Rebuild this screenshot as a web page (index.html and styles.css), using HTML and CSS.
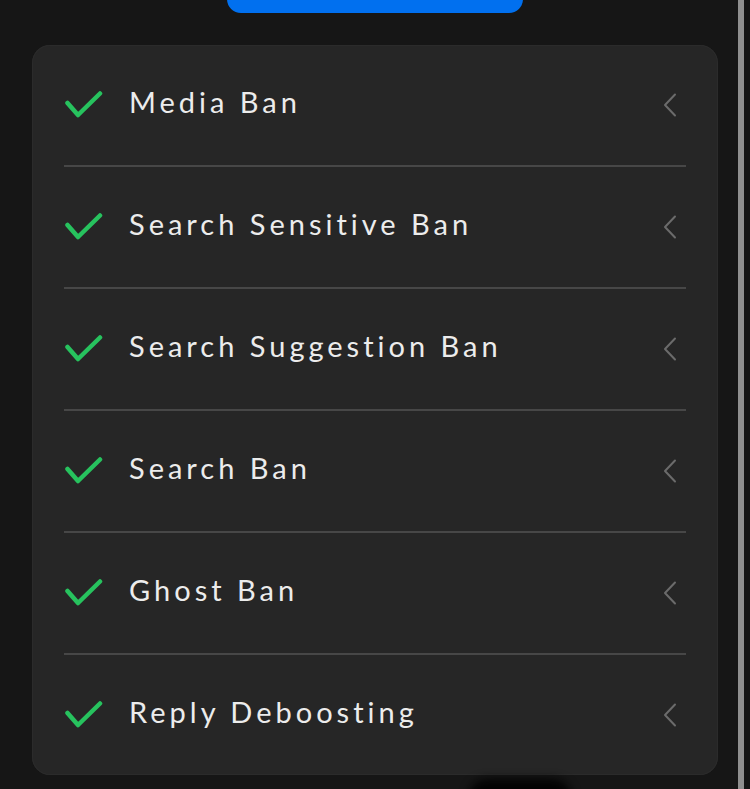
FILE: index.html
```html
<!DOCTYPE html>
<html lang="en">
<head>
<meta charset="utf-8">
<title>Ban checks</title>
<link rel="stylesheet" href="styles.css">
</head>
<body>
<div class="main">
  <div class="top-button"></div>
  <div class="card">
    <div class="row">
      <svg class="check" width="40" height="28" viewBox="0 0 40 28"><path d="M3.5 12 L14 24 L36 2.5" fill="none" stroke="#27c25e" stroke-width="4.5" stroke-linecap="round" stroke-linejoin="round"/></svg>
      <span class="label">Media Ban</span>
      <svg class="chev" width="14" height="24" viewBox="0 0 14 24"><path d="M12 1.5 L2 12 L12 22.5" fill="none" stroke="#6b6b6b" stroke-width="2" stroke-linecap="round" stroke-linejoin="round"/></svg>
    </div>
    <div class="row">
      <svg class="check" width="40" height="28" viewBox="0 0 40 28"><path d="M3.5 12 L14 24 L36 2.5" fill="none" stroke="#27c25e" stroke-width="4.5" stroke-linecap="round" stroke-linejoin="round"/></svg>
      <span class="label">Search Sensitive Ban</span>
      <svg class="chev" width="14" height="24" viewBox="0 0 14 24"><path d="M12 1.5 L2 12 L12 22.5" fill="none" stroke="#6b6b6b" stroke-width="2" stroke-linecap="round" stroke-linejoin="round"/></svg>
    </div>
    <div class="row">
      <svg class="check" width="40" height="28" viewBox="0 0 40 28"><path d="M3.5 12 L14 24 L36 2.5" fill="none" stroke="#27c25e" stroke-width="4.5" stroke-linecap="round" stroke-linejoin="round"/></svg>
      <span class="label">Search Suggestion Ban</span>
      <svg class="chev" width="14" height="24" viewBox="0 0 14 24"><path d="M12 1.5 L2 12 L12 22.5" fill="none" stroke="#6b6b6b" stroke-width="2" stroke-linecap="round" stroke-linejoin="round"/></svg>
    </div>
    <div class="row">
      <svg class="check" width="40" height="28" viewBox="0 0 40 28"><path d="M3.5 12 L14 24 L36 2.5" fill="none" stroke="#27c25e" stroke-width="4.5" stroke-linecap="round" stroke-linejoin="round"/></svg>
      <span class="label">Search Ban</span>
      <svg class="chev" width="14" height="24" viewBox="0 0 14 24"><path d="M12 1.5 L2 12 L12 22.5" fill="none" stroke="#6b6b6b" stroke-width="2" stroke-linecap="round" stroke-linejoin="round"/></svg>
    </div>
    <div class="row">
      <svg class="check" width="40" height="28" viewBox="0 0 40 28"><path d="M3.5 12 L14 24 L36 2.5" fill="none" stroke="#27c25e" stroke-width="4.5" stroke-linecap="round" stroke-linejoin="round"/></svg>
      <span class="label">Ghost Ban</span>
      <svg class="chev" width="14" height="24" viewBox="0 0 14 24"><path d="M12 1.5 L2 12 L12 22.5" fill="none" stroke="#6b6b6b" stroke-width="2" stroke-linecap="round" stroke-linejoin="round"/></svg>
    </div>
    <div class="row">
      <svg class="check" width="40" height="28" viewBox="0 0 40 28"><path d="M3.5 12 L14 24 L36 2.5" fill="none" stroke="#27c25e" stroke-width="4.5" stroke-linecap="round" stroke-linejoin="round"/></svg>
      <span class="label">Reply Deboosting</span>
      <svg class="chev" width="14" height="24" viewBox="0 0 14 24"><path d="M12 1.5 L2 12 L12 22.5" fill="none" stroke="#6b6b6b" stroke-width="2" stroke-linecap="round" stroke-linejoin="round"/></svg>
    </div>
  </div>
  <div class="shadow-blob"></div>
</div>
<div class="scrollbar"></div>
<div class="edge"></div>
</body>
</html>
```

FILE: styles.css
```css
html, body {
  margin: 0;
  padding: 0;
}
body {
  background: #161616;
  display: flex;
  height: 789px;
  overflow: hidden;
  font-family: Lato, "Liberation Sans", sans-serif;
}
.main {
  width: 738px;
  box-sizing: border-box;
  padding: 0 20px 0 32px;
  overflow: hidden;
}
.top-button {
  margin-top: -37px;
  margin-left: 195px;
  width: 296px;
  height: 50px;
  border-radius: 14px;
  background: #0170ef;
}
.card {
  margin-top: 32px;
  background: #262626;
  border-radius: 18px;
  padding: 0 32px;
  box-shadow: inset 0 0 0 1px #2b2b2b;
}
.row {
  height: 120px;
  display: flex;
  align-items: center;
  border-bottom: 2px solid #474747;
}
.row:last-child {
  border-bottom: none;
}
.check {
  flex: none;
}
.label {
  margin-left: 25px;
  flex: 1;
  color: #ececec;
  font-size: 29px;
  letter-spacing: 4px;
  font-weight: 400;
  margin-top: -8px;
}
.chev {
  flex: none;
  margin-right: 9px;
}
.shadow-blob {
  margin-top: 4px;
  margin-left: 436px;
  width: 104px;
  height: 40px;
  border-radius: 20px;
  background: #020202;
  filter: blur(5px);
}
.scrollbar {
  width: 6px;
  background: #8f8f8f;
  flex: none;
}
.edge {
  flex: 1;
  background: #151515;
}
```
